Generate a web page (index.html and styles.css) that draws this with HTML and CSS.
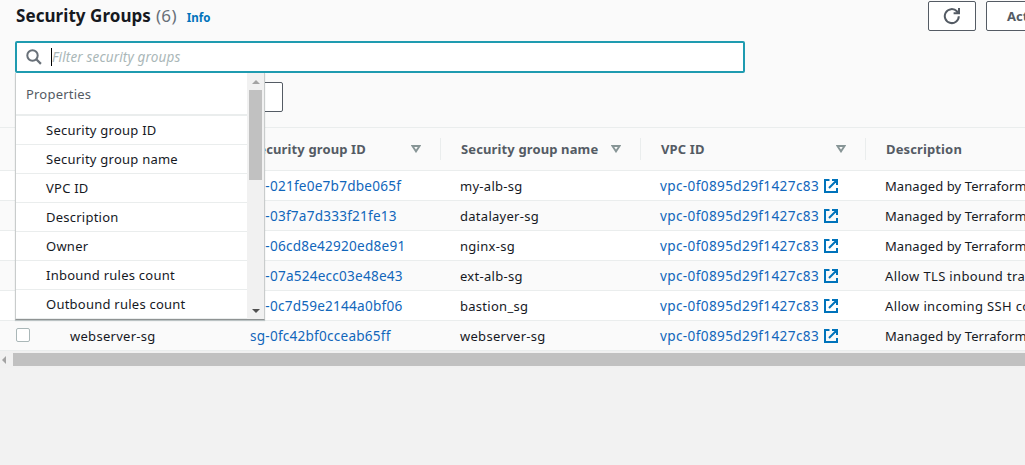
FILE: index.html
```html
<!DOCTYPE html>
<html lang="en">
<head>
<meta charset="utf-8">
<title>Security Groups</title>
<link rel="stylesheet" href="styles.css">
</head>
<body>
<svg class="defs" width="0" height="0" aria-hidden="true">
  <symbol id="external" viewBox="0 0 14 14"><path d="M5.5 1H1v12h12V9M8 1h5v5M13 1L5 9" fill="none" stroke="#0073bb" stroke-width="2"/></symbol>
  <symbol id="sort" viewBox="0 0 10 8"><path d="M1.4 1h7.2L5 6.4z" fill="none" stroke="#879596" stroke-width="1.9"/></symbol>
</svg>
<main class="panel">
  <header class="heading">
    <h1 class="title">Security Groups</h1><span class="count">(6)</span><a class="info">Info</a>
    <div class="actions">
      <button class="button refresh" aria-label="Refresh"><svg width="18" height="18" viewBox="0 0 18 18"><path d="M15.8 9.2A7 7 0 1 1 13.9 4.3L15.8 6M16 1v5.2h-5.4" fill="none" stroke="#545b64" stroke-width="2"/></svg></button>
      <button class="button more">Actions</button>
    </div>
  </header>
  <div class="filter">
    <div class="search">
      <svg width="16" height="16" viewBox="0 0 16 16"><circle cx="6.5" cy="6.5" r="5.2" fill="none" stroke="#687078" stroke-width="2"/><path d="M10.3 10.3l4.6 4.6" stroke="#687078" stroke-width="2.2"/></svg>
      <span class="caret"></span><span class="placeholder">Filter security groups</span>
    </div>
    <div class="dropdown">
      <div class="options">
        <div class="group">Properties</div>
        <div class="option">Security group ID</div>
        <div class="option">Security group name</div>
        <div class="option">VPC ID</div>
        <div class="option">Description</div>
        <div class="option">Owner</div>
        <div class="option">Inbound rules count</div>
        <div class="option">Outbound rules count</div>
      </div>
      <div class="scroll"><i class="up"></i><i class="thumb"></i><i class="down"></i></div>
    </div>
  </div>
  <div class="token"></div>
  <div class="table">
    <div class="row head"><span></span><span></span><span class="cell"><b>Security group ID</b><svg class="sort"><use href="#sort"/></svg></span><span class="cell"><b>Security group name</b><svg class="sort"><use href="#sort"/></svg></span><span class="cell"><b>VPC ID</b><svg class="sort"><use href="#sort"/></svg></span><span class="cell last"><b>Description</b></span></div>
    <div class="row"><span></span><span></span><a>sg-021fe0e7b7dbe065f</a><span class="name">my-alb-sg</span><a class="vpc">vpc-0f0895d29f1427c83<svg class="ext"><use href="#external"/></svg></a><span class="managed">Managed by Terraform</span></div>
    <div class="row"><span></span><span></span><a>sg-03f7a7d333f21fe13</a><span class="name">datalayer-sg</span><a class="vpc">vpc-0f0895d29f1427c83<svg class="ext"><use href="#external"/></svg></a><span class="managed">Managed by Terraform</span></div>
    <div class="row"><span></span><span></span><a>sg-06cd8e42920ed8e91</a><span class="name">nginx-sg</span><a class="vpc">vpc-0f0895d29f1427c83<svg class="ext"><use href="#external"/></svg></a><span class="managed">Managed by Terraform</span></div>
    <div class="row"><span></span><span></span><a>sg-07a524ecc03e48e43</a><span class="name">ext-alb-sg</span><a class="vpc">vpc-0f0895d29f1427c83<svg class="ext"><use href="#external"/></svg></a><span class="allow">Allow TLS inbound traffic</span></div>
    <div class="row"><span></span><span></span><a>sg-0c7d59e2144a0bf06</a><span class="name">bastion_sg</span><a class="vpc">vpc-0f0895d29f1427c83<svg class="ext"><use href="#external"/></svg></a><span class="allow">Allow incoming SSH connections</span></div>
    <div class="row"><i class="check"></i><span class="name">webserver-sg</span><a>sg-0fc42bf0cceab65ff</a><span class="name">webserver-sg</span><a class="vpc">vpc-0f0895d29f1427c83<svg class="ext"><use href="#external"/></svg></a><span class="managed">Managed by Terraform</span></div>
  </div>
</main>
<div class="hscroll"><i class="left"></i><i class="bar"></i></div>
</body>
</html>
```
FILE: styles.css
```css
* { box-sizing: border-box; }
body { margin: 0; width: 1025px; height: 465px; overflow: hidden; background: #f2f2f2; color: #16191f; font: 13px/20px "Noto Sans", sans-serif; }
.defs { display: block; }
.panel { background: #fafafa; height: 351px; }
.heading { display: flex; height: 41px; padding: 1px 0 0 16px; overflow: hidden; }
.title { margin: 5px 5px 0 0; font-size: 17px; line-height: 20px; letter-spacing: .06px; }
.count { margin-top: 5px; font-size: 17px; letter-spacing: .3px; color: #687078; }
.info { margin: 7px 0 0 10px; font-size: 11.5px; font-weight: 700; color: #0073bb; }
.actions { display: flex; gap: 10px; margin-left: auto; width: 97px; }
.button { flex: none; height: 30px; border: 1px solid #545b64; border-radius: 2px; background: #fff; padding: 0; color: #545b64; font: 700 13px/20px "Noto Sans", sans-serif; }
.refresh { width: 48px; display: flex; align-items: center; justify-content: center; }
.more { width: 100px; padding-left: 20px; text-align: left; }
.filter { position: relative; width: 730px; margin-left: 15px; }
.search { display: flex; align-items: center; height: 32px; padding-left: 9px; border: 2px solid #1f9bb0; border-radius: 2px; background: #fff; }
.caret { width: 1px; height: 18px; margin-left: 9px; background: #000; }
.placeholder { font-size: 13.5px; font-style: italic; letter-spacing: .15px; color: #aab7b8; }
.dropdown { position: absolute; z-index: 1; top: 32px; left: 0; width: 250px; height: 247px; display: flex; background: #fff; border: 1px solid #c9cccc; border-top: 0; border-bottom-color: #8f9393; box-shadow: 0 1px 1px rgba(0,28,36,.2); overflow: hidden; }
.options { flex: 1; }
.group { height: 43px; padding: 11px 0 0 10px; border-bottom: 2px solid #eaeded; color: #545b64; letter-spacing: .2px; }
.option { height: 29px; padding: 4px 0 0 30px; border-bottom: 1px solid #eaeded; letter-spacing: .24px; }
.scroll { width: 17px; background: #f1f1f1; display: flex; flex-direction: column; align-items: center; }
.up { margin-top: 7px; border: 4px solid transparent; border-top: 0; border-bottom: 4px solid #a3a3a3; }
.thumb { margin-top: 6px; width: 13px; height: 90px; background: #c1c1c1; }
.down { margin: auto 0 6px; border: 4px solid transparent; border-bottom: 0; border-top: 4px solid #505050; }
.token { width: 200px; height: 30px; margin: 9px 0 15px 83px; border: 1px solid #545b64; border-radius: 2px; background: #fff; }
.table { border-top: 1px solid #eaeded; }
.row { display: grid; grid-template-columns: 54px 180px 210px 200px 225px 1fr; align-items: center; height: 30px; padding-left: 16px; border-bottom: 1px solid #eaeded; background: #fff; white-space: nowrap; overflow: hidden; }
.row:nth-child(odd) { background: #fafafa; }
.row a { color: #1166bb; font-size: 13.6px; letter-spacing: .22px; }
.head { height: 43px; color: #545b64; letter-spacing: .13px; }
.cell { display: flex; align-items: center; justify-content: space-between; height: 22px; margin-right: 19px; padding: 0 19px 0 1px; border-right: 1px solid #eaeded; }
.last { border: 0; }
.sort { width: 10px; height: 8px; }
.name { letter-spacing: .28px; }
.managed { letter-spacing: .08px; }
.allow { letter-spacing: .36px; }
.row .vpc { display: flex; align-items: center; letter-spacing: .36px; }
.ext { width: 14px; height: 14px; margin-left: 5px; }
.check { width: 14px; height: 14px; border: 1px solid #aab7b8; border-radius: 2px; background: #fff; position: relative; top: -1px; }
.hscroll { display: flex; align-items: center; height: 17px; background: #f1f1f1; }
.left { width: 4px; margin: 0 7px 0 2px; border: 4px solid transparent; border-left: 0; border-right: 4px solid #a3a3a3; }
.bar { flex: 1; height: 13px; background: #c1c1c1; }
```
